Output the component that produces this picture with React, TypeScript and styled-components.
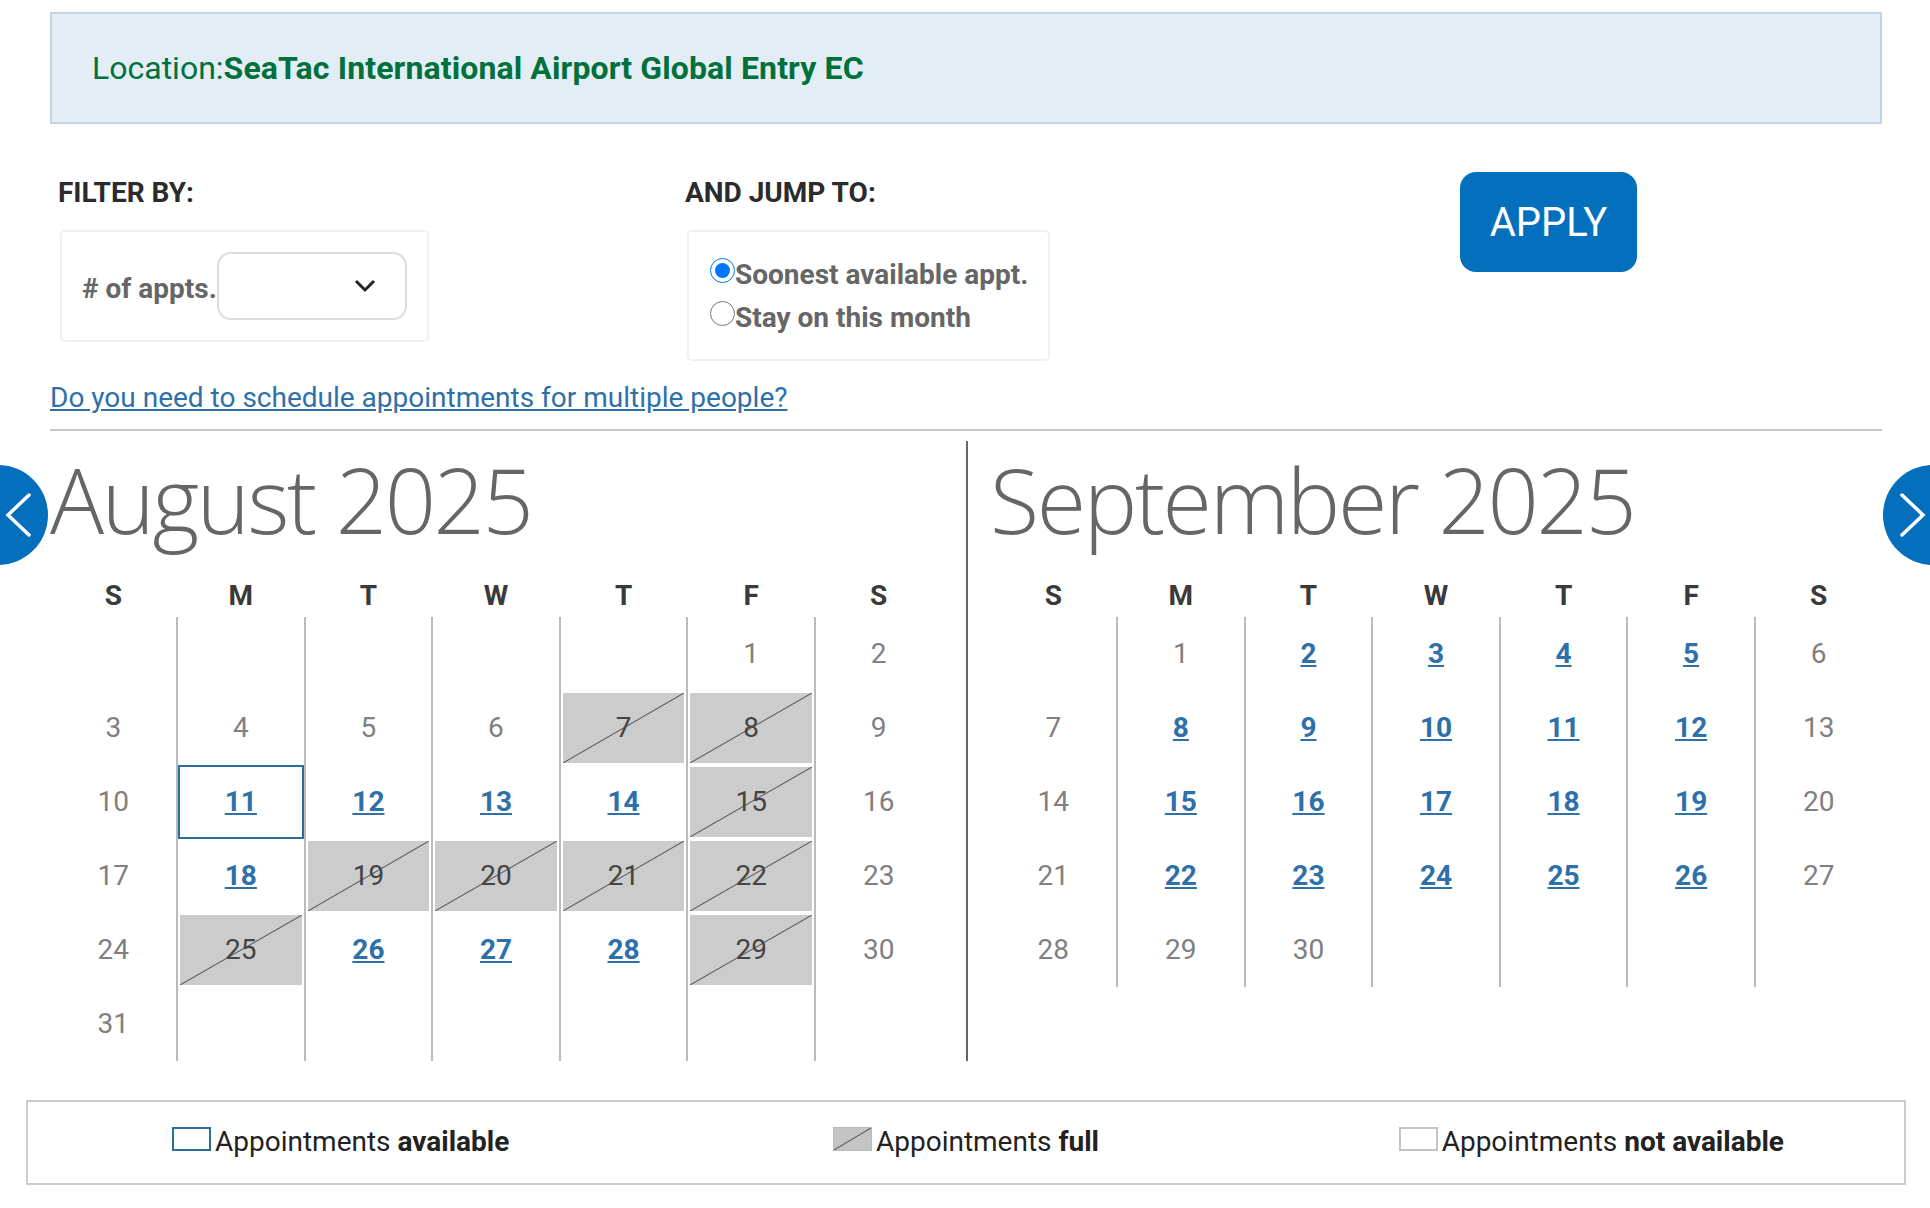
import React from "react";
import styled, { createGlobalStyle } from "styled-components";

const Global = createGlobalStyle`
  html, body { margin: 0; padding: 0; background: #fff; overflow-x: hidden; }
  body { font-family: Roboto, "Liberation Sans", sans-serif; width: 1930px; height: 1208px; overflow: hidden; position: relative; }
  * { box-sizing: border-box; }
`;

const Page = styled.div`
  padding: 12px 48px 0 50px;
`;
const Banner = styled.div`
  height: 112px;
  background: #e3edf5;
  border: 2px solid #c2d4e4;
  padding-left: 40px;
  display: flex;
  align-items: center;
  font-size: 32px;
  color: #00703c;
`;
const BannerName = styled.strong`
  letter-spacing: 0.115px;
`;
const Filters = styled.div`
  display: grid;
  grid-template-columns: 627px 775px 177px;
  padding: 48px 0 0 8px;
  height: 242px;
`;
const Column = styled.div`
  display: flex;
  flex-direction: column;
  align-items: flex-start;
`;
const Label = styled.div`
  font-size: 28px;
  font-weight: 700;
  height: 40px;
  line-height: 42px;
  color: #2b2b2b;
`;
const Card = styled.div<{ $h: number; $w: number }>`
  width: ${(p) => p.$w}px;
  height: ${(p) => p.$h}px;
  margin: 18px 0 0 2px;
  border: 2px solid #f0f0f0;
  border-radius: 5px;
  background: #fff;
`;
const FilterCard = styled(Card)`
  display: flex;
  align-items: center;
  padding-left: 20px;
`;
const FieldLabel = styled.span`
  font-size: 28px;
  font-weight: 700;
  color: #666;
  width: 135px;
  margin-top: 5px;
  white-space: nowrap;
`;
const SelectBox = styled.div`
  width: 190px;
  height: 68px;
  border: 2px solid #dcdcdc;
  border-radius: 14px;
  display: flex;
  align-items: center;
  justify-content: flex-end;
  padding: 0 28px 0 0;
`;
const RadioCard = styled(Card)`
  padding: 26px 0 0 21px;
`;
const RadioRow = styled.label`
  display: flex;
  align-items: flex-start;
  height: 43px;
  font-size: 28px;
  font-weight: 700;
  color: #666;
  line-height: 32px;
`;
const Radio = styled.input`
  width: 25px;
  height: 25px;
  margin: 0;
  flex: none;
`;
const RadioText = styled.span`
  margin-top: 1px;
`;
const ApplyButton = styled.button`
  width: 177px;
  height: 100px;
  border: none;
  border-radius: 16px;
  background: #0470bd;
  color: #fff;
  font: 400 40px Roboto, sans-serif;
`;
const MultiLink = styled.a`
  display: block;
  font-size: 28px;
  line-height: 34px;
  color: #2e70aa;
  text-decoration: underline;
  margin-top: 15px;
  height: 48px;
`;
const Rule = styled.hr`
  border: none;
  height: 2px;
  margin: 0 0 10px;
  background: #c8c8c8;
`;
const Calendars = styled.div`
  display: flex;
  align-items: flex-start;
  margin-left: -1.5px;
`;
const Month = styled.section`
  width: 893px;
  flex: none;
`;
const Separator = styled.div`
  width: 2px;
  height: 620px;
  margin: 0 21px 0 24px;
  background: #666;
  flex: none;
`;
const MonthTitle = styled.h2`
  margin: 0;
  padding-left: 1.5px;
  height: 108px;
  font: 300 90px/117px "Open Sans", sans-serif;
  color: #666;
  letter-spacing: -2.4px;
  white-space: nowrap;
`;
const Week = styled.div`
  display: grid;
  grid-template-columns: repeat(7, 1fr);
`;
const DayName = styled.div`
  height: 68px;
  padding: 27px 0 0 2px;
  text-align: center;
  font-size: 28px;
  font-weight: 700;
  line-height: 40px;
  color: #3a3a3a;
`;
const Cell = styled.div<{ $col: number }>`
  height: 74px;
  padding: 2px;
  ${(p) => (p.$col > 0 ? "border-left: 2px solid #bbb;" : "padding-left: 4px;")}
`;
const Inner = styled.div<{ $kind: string }>`
  height: 70px;
  padding-bottom: 2px;
  display: flex;
  align-items: center;
  justify-content: center;
  font-size: 28px;
  color: ${(p) => (p.$kind === "full" ? "#444" : "#808080")};
  ${(p) =>
    p.$kind === "full"
      ? `background: linear-gradient(to top left, transparent calc(50% - 1px), #555 50%, transparent calc(50% + 1px)), #ccc;`
      : ""}
  ${(p) => (p.$kind === "today" ? "border: 2px solid #2a6f97; margin: -2px -2px 0 -2px; height: 74px;" : "")}
`;
const DayLink = styled.a`
  color: #2e70aa;
  font-weight: 700;
  text-decoration: underline;
`;
const NavCircle = styled.button<{ $side: "left" | "right" }>`
  position: absolute;
  top: 465px;
  ${(p) => (p.$side === "left" ? "left: -52px;" : "left: 1883px;")}
  width: 100px;
  height: 100px;
  border: none;
  padding: 0;
  border-radius: 50%;
  background: #0470bd;
`;
const Chevron = styled.svg<{ $side: "left" | "right" }>`
  position: absolute;
  top: 30px;
  ${(p) => (p.$side === "left" ? "left: 59px;" : "left: 17px;")}
  width: 24px;
  height: 40px;
  overflow: visible;
  fill: none;
  stroke: #fff;
  stroke-width: 3.5;
  stroke-linecap: round;
`;
const Legend = styled.div`
  display: grid;
  grid-template-columns: repeat(3, 1fr);
  align-items: center;
  width: 1880px;
  height: 85px;
  margin: 39px 0 0 -24px;
  border: 2px solid #ccc;
  background: #fff;
`;
const LegendItem = styled.div`
  display: flex;
  justify-content: center;
  align-items: flex-start;
  font-size: 28px;
  line-height: 32px;
  color: #222;
  gap: 4px;
`;
const LegendText = styled.span`
  margin-top: -1px;
`;
const Swatch = styled.span<{ $kind: string }>`
  width: 39px;
  height: 24px;
  flex: none;
  ${(p) => p.$kind === "available" && "border: 2px solid #2a6f97;"}
  ${(p) => p.$kind === "none" && "border: 2px solid #c4c4c4;"}
  ${(p) =>
    p.$kind === "full" &&
    "border: 1px solid #bbb; background: linear-gradient(to top left, #c4c4c4 calc(50% - 1px), #555 50%, #c4c4c4 calc(50% + 1px));"}
`;

type Kind = "plain" | "open" | "full" | "today";
type Day = { d: number; kind: Kind } | null;

function build(first: number, count: number, open: number[], full: number[], today = 0): Day[] {
  const out: Day[] = Array(first).fill(null);
  for (let d = 1; d <= count; d++) {
    const kind: Kind = d === today ? "today" : full.includes(d) ? "full" : open.includes(d) ? "open" : "plain";
    out.push({ d, kind });
  }
  while (out.length % 7) out.push(null);
  return out;
}

const august = build(5, 31, [12, 13, 14, 18, 26, 27, 28], [7, 8, 15, 19, 20, 21, 22, 25, 29], 11);
const september = build(1, 30, [2, 3, 4, 5, 8, 9, 10, 11, 12, 15, 16, 17, 18, 19, 22, 23, 24, 25, 26], []);

const NAMES = ["S", "M", "T", "W", "T", "F", "S"];

const Calendar = ({ title, days }: { title: string; days: Day[] }) => (
  <Month>
    <MonthTitle>{title}</MonthTitle>
    <Week>
      {NAMES.map((n, i) => (
        <DayName key={i}>{n}</DayName>
      ))}
      {days.map((day, i) => (
        <Cell key={i} $col={i % 7}>
          {day && (
            <Inner $kind={day.kind}>
              {day.kind === "open" || day.kind === "today" ? <DayLink href="#">{day.d}</DayLink> : day.d}
            </Inner>
          )}
        </Cell>
      ))}
    </Week>
  </Month>
);

export default function App() {
  return (
    <>
      <Global />
      <Page>
        <Banner>
          <span>Location:</span>
          <BannerName>SeaTac International Airport Global Entry EC</BannerName>
        </Banner>
        <Filters>
          <Column>
            <Label>FILTER BY:</Label>
            <FilterCard $w={369} $h={112}>
              <FieldLabel># of appts.</FieldLabel>
              <SelectBox>
                <svg width="24" height="14" viewBox="0 0 24 14" fill="none" stroke="#222" strokeWidth="3">
                  <path d="M3 2l9 9 9-9" />
                </svg>
              </SelectBox>
            </FilterCard>
          </Column>
          <Column>
            <Label>AND JUMP TO:</Label>
            <RadioCard $w={363} $h={131}>
              <RadioRow>
                <Radio type="radio" name="jump" defaultChecked />
                <RadioText>Soonest available appt.</RadioText>
              </RadioRow>
              <RadioRow>
                <Radio type="radio" name="jump" />
                <RadioText>Stay on this month</RadioText>
              </RadioRow>
            </RadioCard>
          </Column>
          <ApplyButton>APPLY</ApplyButton>
        </Filters>
        <MultiLink href="#">Do you need to schedule appointments for multiple people?</MultiLink>
        <Rule />
        <Calendars>
          <Calendar title="August 2025" days={august} />
          <Separator />
          <Calendar title="September 2025" days={september} />
        </Calendars>
        <Legend>
          <LegendItem>
            <Swatch $kind="available" />
            <LegendText>
              Appointments <b>available</b>
            </LegendText>
          </LegendItem>
          <LegendItem>
            <Swatch $kind="full" />
            <LegendText>
              Appointments <b>full</b>
            </LegendText>
          </LegendItem>
          <LegendItem>
            <Swatch $kind="none" />
            <LegendText>
              Appointments <b>not available</b>
            </LegendText>
          </LegendItem>
        </Legend>
      </Page>
      <NavCircle $side="left" aria-label="Previous">
        <Chevron $side="left" viewBox="0 0 24 40">
          <path d="M22 0L1 20l21 20" />
        </Chevron>
      </NavCircle>
      <NavCircle $side="right" aria-label="Next">
        <Chevron $side="right" viewBox="0 0 24 40">
          <path d="M2 0l21 20L2 40" />
        </Chevron>
      </NavCircle>
    </>
  );
}
